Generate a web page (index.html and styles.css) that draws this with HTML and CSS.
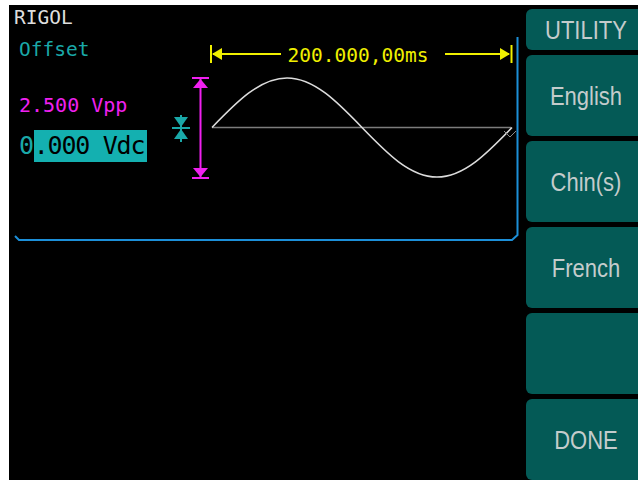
FILE: index.html
```html
<!DOCTYPE html>
<html lang="en">
<head>
    <meta charset="UTF-8">
    <meta name="viewport" content="width=device-width, initial-scale=1.0">
    <title>RIGOL Utility</title>
    <link rel="stylesheet" href="styles.css">
</head>
<body>
    <div class="screen">
        <div class="display">
            <svg class="wave" width="518" height="475" viewBox="9 5 518 475">
                <!-- frame -->
                <path d="M15,236 L19,240 L512,240 L517.5,235 L517.5,37" fill="none" stroke="#1c8fd8" stroke-width="2"/>

                <!-- time span -->
                <g stroke="#f0f000" stroke-width="2" fill="#f0f000">
                    <line x1="211" y1="45" x2="211" y2="63"/>
                    <line x1="213" y1="54" x2="281" y2="54"/>
                    <polygon points="212,54 222,48 222,60" stroke="none"/>
                    <line x1="511.5" y1="45" x2="511.5" y2="63"/>
                    <line x1="445" y1="54" x2="509" y2="54"/>
                    <polygon points="510,54 500,48 500,60" stroke="none"/>
                </g>
                <text class="span-label" x="358" y="62" text-anchor="middle">200.000,00ms</text>

                <!-- amplitude -->
                <g stroke="#f020f0" stroke-width="2" fill="#f020f0">
                    <line x1="192" y1="78" x2="209" y2="78"/>
                    <line x1="192" y1="178" x2="209" y2="178"/>
                    <line x1="200.5" y1="78" x2="200.5" y2="178"/>
                    <polygon points="200.5,79 193,88 208,88" stroke="none"/>
                    <polygon points="200.5,177 193,168 208,168" stroke="none"/>
                </g>

                <!-- offset -->
                <g stroke="#1aa8a8" stroke-width="2" fill="#1aa8a8">
                    <line x1="172" y1="128" x2="190" y2="128"/>
                    <line x1="181" y1="115" x2="181" y2="142"/>
                    <polygon points="181,127 174,117 188,117" stroke="none"/>
                    <polygon points="181,129 174,139 188,139" stroke="none"/>
                </g>

                <!-- trace -->
                <line x1="212" y1="127.5" x2="511" y2="127.5" stroke="#7c7c7c" stroke-width="1.5"/>
                <path d="M212,127.5 C236.5,102.1 259.9,78 287,78 C314.1,78 337.5,102.1 362,127.5 C386.5,152.9 409.9,177 437,177 C464.1,177 487.5,152.9 512,127.5" fill="none" stroke="#dcdcdc" stroke-width="1.6"/>
                <polyline points="504,131 510,137 516,131" fill="none" stroke="#8a8a8a" stroke-width="1"/>
            </svg>

            <div class="brand">RIGOL</div>
            <div class="param-name">Offset</div>
            <div class="amp">2.500 Vpp</div>
            <div class="offset"><span class="digit">0</span><span class="edit">.000 Vdc</span></div>
        </div>

        <div class="menu">
            <div class="softkey title"><span>UTILITY</span></div>
            <div class="softkey"><span>English</span></div>
            <div class="softkey"><span>Chin(s)</span></div>
            <div class="softkey"><span>French</span></div>
            <div class="softkey"></div>
            <div class="softkey"><span>DONE</span></div>
        </div>
    </div>
</body>
</html>
```

FILE: styles.css
```css
body {
    margin: 0;
    padding: 0;
    background-color: #fff;
}

.screen {
    margin: 5px 0 0 9px;
    width: 629px;
    height: 475px;
    background-color: #000;
    display: flex;
    overflow: hidden;
}

.display {
    position: relative;
    width: 517px;
    flex-shrink: 0;
    padding: 3px 0 0 5px;
    box-sizing: border-box;
    font-family: 'DejaVu Sans Mono', monospace;
}

.wave {
    position: absolute;
    left: 0;
    top: 0;
}

.span-label {
    font-family: 'DejaVu Sans Mono', monospace;
    font-size: 19.5px;
    fill: #f0f000;
}

.brand {
    position: relative;
    font-size: 19.5px;
    line-height: 20px;
    color: #dedede;
}

.param-name {
    position: relative;
    margin: 12px 0 0 5px;
    font-size: 19.5px;
    line-height: 20px;
    color: #1aa8a8;
}

.amp {
    position: relative;
    margin: 35px 0 0 5px;
    font-size: 20px;
    line-height: 20px;
    color: #f020f0;
}

.offset {
    position: relative;
    margin: 15px 0 0 5px;
    font-size: 25px;
    letter-spacing: -1.25px;
    line-height: 32px;
    color: #1aa8a8;
}

.offset .digit {
    padding-right: 1px;
}

.offset .edit {
    display: inline-block;
    background-color: #14b0b0;
    color: #000;
    padding-right: 3px;
}

.menu {
    flex: 1;
    display: flex;
    flex-direction: column;
    gap: 5px;
    padding-top: 4px;
}

.softkey {
    flex-shrink: 0;
    height: 81px;
    padding-left: 8px;
    background-color: #045a56;
    border-radius: 6px 0 0 6px;
    display: flex;
    align-items: center;
    justify-content: center;
    font-family: 'Liberation Sans', Arial, sans-serif;
    font-size: 22px;
    color: #c4cccc;
}

.softkey span {
    display: inline-block;
    transform: scaleY(1.15);
    padding-top: 2px;
}

.softkey.title {
    height: 41px;
}
```
